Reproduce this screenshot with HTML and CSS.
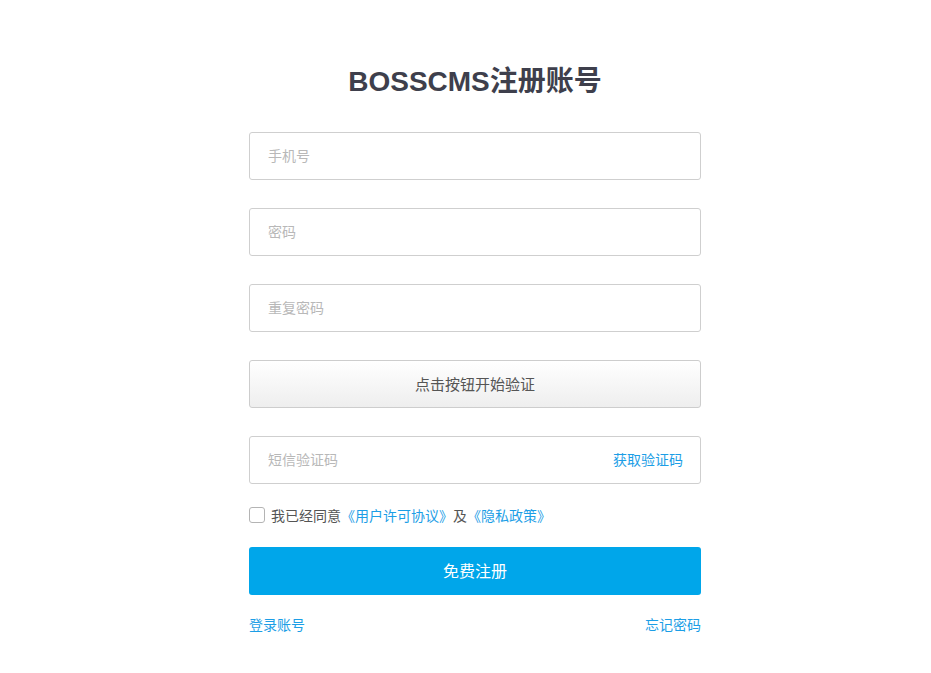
FILE: index.html
```html
<!DOCTYPE html>
<html lang="zh">
<head>
<meta charset="utf-8">
<title>BOSSCMS注册账号</title>
<link rel="stylesheet" href="styles.css">
</head>
<body>
<div class="wrap">
  <h1 class="title">BOSSCMS注册账号</h1>
  <form class="form">
    <div class="field"><input type="text" placeholder="手机号"></div>
    <div class="field"><input type="password" placeholder="密码"></div>
    <div class="field"><input type="password" placeholder="重复密码"></div>
    <div class="verify">点击按钮开始验证</div>
    <div class="field sms"><input type="text" placeholder="短信验证码"><a class="getcode">获取验证码</a></div>
    <label class="agree"><span class="box"></span><span>我已经同意</span><a class="link">《用户许可协议》</a><span>及</span><a class="link">《隐私政策》</a></label>
    <div class="submit">免费注册</div>
    <div class="links"><a class="link">登录账号</a><a class="link">忘记密码</a></div>
  </form>
</div>
</body>
</html>
```
FILE: styles.css
```css
* { box-sizing: border-box; }
body {
  margin: 0;
  padding-left: 19px;
  background: #fff;
  font-family: "Microsoft YaHei", "Noto Sans CJK SC", "Liberation Sans", sans-serif;
  color: #555;
}
.wrap {
  width: 452px;
  margin: 0 auto;
}
.title {
  margin: 62px 0 30px;
  font-family: "Liberation Sans", "Noto Sans CJK SC", sans-serif;
  font-size: 28px;
  line-height: 40px;
  font-weight: bold;
  text-align: center;
  color: #3e3f4c;
}
.form { display: flex; flex-direction: column; }
.field {
  height: 48px;
  border: 1px solid #cfcfcf;
  border-radius: 3px;
  margin-bottom: 28px;
  display: flex;
  align-items: center;
  padding: 0 17px 2px 18px;
}
.field input {
  flex: 1;
  border: 0;
  outline: 0;
  height: 100%;
  font-family: inherit;
  font-size: 14px;
  color: #555;
  padding: 0;
  background: transparent;
}
.field input::placeholder { color: #b8b8b8; }
.verify {
  height: 48px;
  border: 1px solid #cdcdcd;
  border-radius: 3px;
  margin-bottom: 28px;
  padding-bottom: 2px;
  background: linear-gradient(#ffffff, #eeeeee);
  display: flex;
  align-items: center;
  justify-content: center;
  font-size: 15px;
  color: #555;
}
.sms { margin-bottom: 21px; }
.getcode {
  color: #1c9ee6;
  font-size: 14px;
  cursor: pointer;
}
.agree {
  display: flex;
  align-items: center;
  height: 20px;
  font-size: 14px;
  color: #555;
}
.box {
  width: 16px;
  height: 16px;
  border: 1px solid #b4b4b4;
  border-radius: 3px;
  margin-right: 6px;
}
.link { color: #1c9ee6; cursor: pointer; text-decoration: none; }
.submit {
  margin-top: 22px;
  height: 48px;
  padding-bottom: 2px;
  border-radius: 3px;
  background: #00a6ea;
  color: #fff;
  font-size: 16px;
  display: flex;
  align-items: center;
  justify-content: center;
}
.links {
  margin-top: 19px;
  display: flex;
  justify-content: space-between;
  font-size: 14px;
  line-height: 20px;
}
```
